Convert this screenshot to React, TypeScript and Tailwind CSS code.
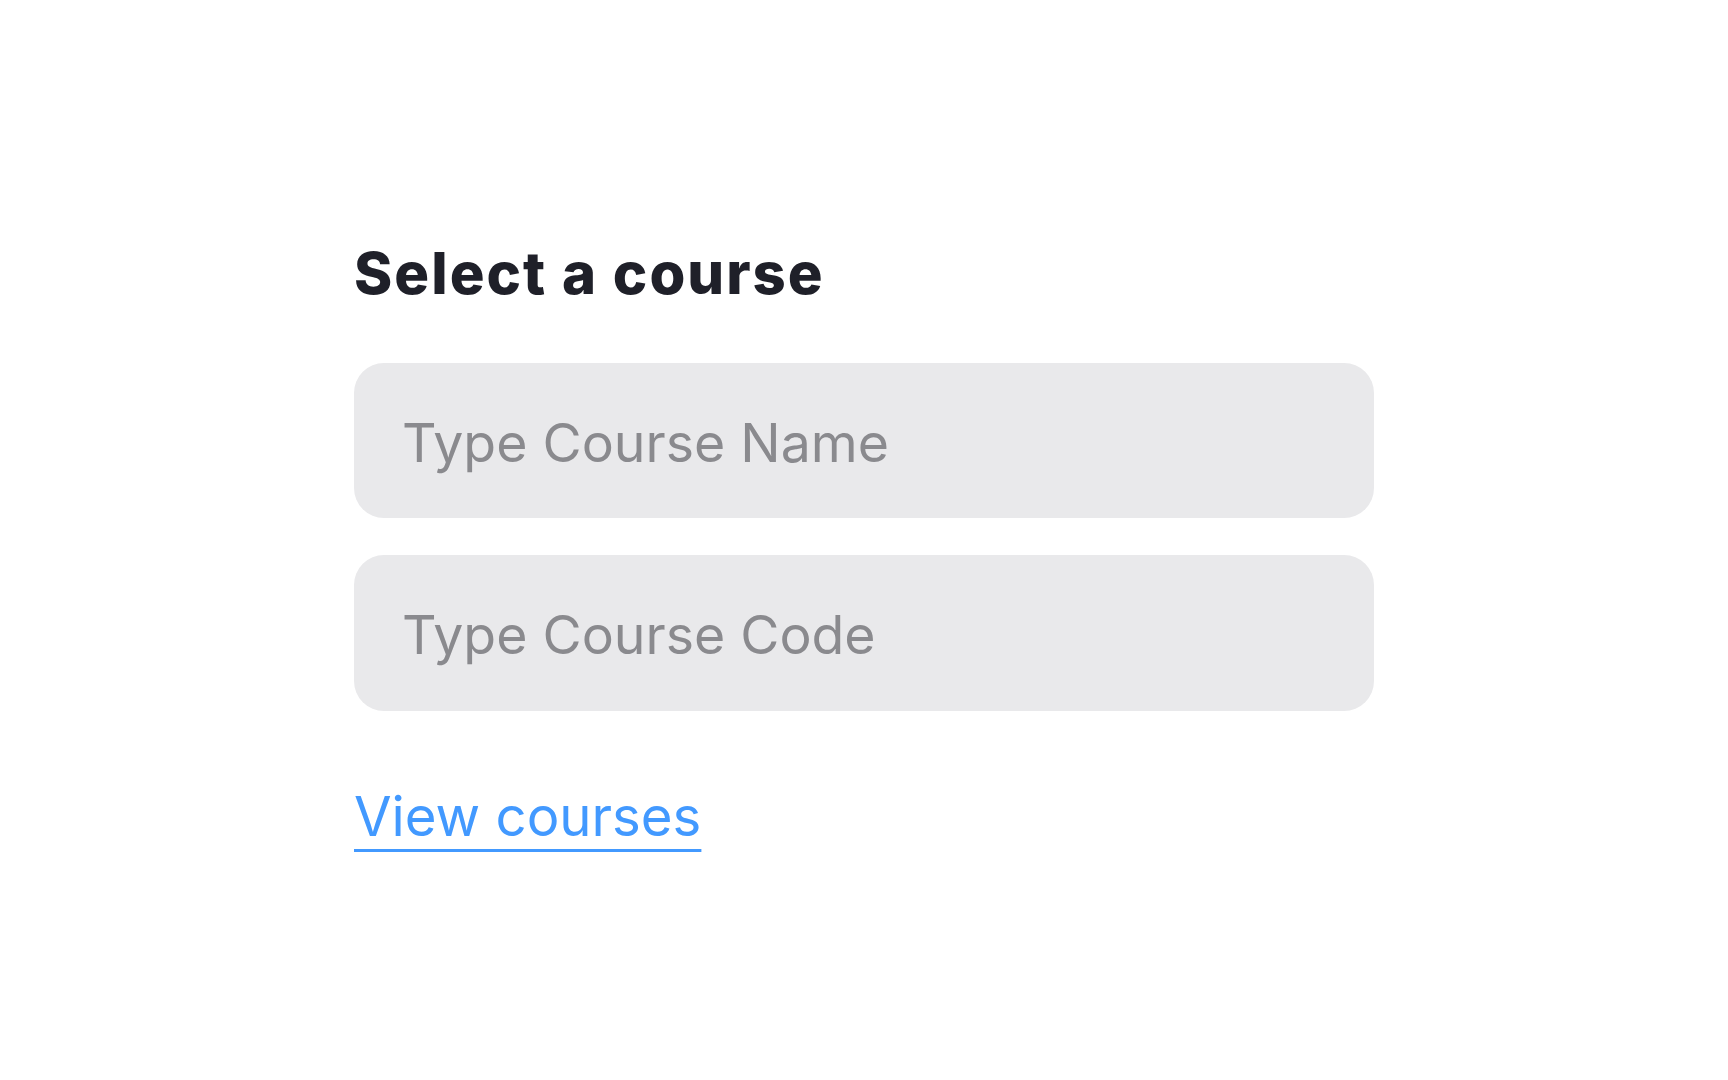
import React from 'react';

export default function App() {
  return (
    <div className="min-h-screen w-full bg-white font-['Inter',sans-serif]">
      <div className="ml-[354px] w-[1020px] pt-[244px] flex flex-col">
        {/* Heading */}
        <h1 className="text-[58px] leading-[58px] font-extrabold text-[#1f2029] tracking-[0.035em]">
          Select a course
        </h1>

        {/* Inputs */}
        <div className="mt-[61px] flex flex-col gap-[37px]">
          <input
            type="text"
            placeholder="Type Course Name"
            className="h-[155px] w-full rounded-[30px] bg-[#e9e9eb] pl-[48px] pt-[3px] text-[53.6px] text-[#1f2029] placeholder:text-[#8a8a8e] outline-none"
          />
          <input
            type="text"
            placeholder="Type Course Code"
            className="h-[156px] w-full rounded-[30px] bg-[#e9e9eb] pl-[48px] pt-[3px] text-[53.6px] text-[#1f2029] placeholder:text-[#8a8a8e] outline-none"
          />
        </div>

        {/* Link */}
        <div className="mt-[78px]">
          <a
            href="#"
            className="text-[54.5px] leading-[55px] text-[#4299ff] underline decoration-[3px] underline-offset-[13px]"
          >
            View courses
          </a>
        </div>
      </div>
    </div>
  );
}
